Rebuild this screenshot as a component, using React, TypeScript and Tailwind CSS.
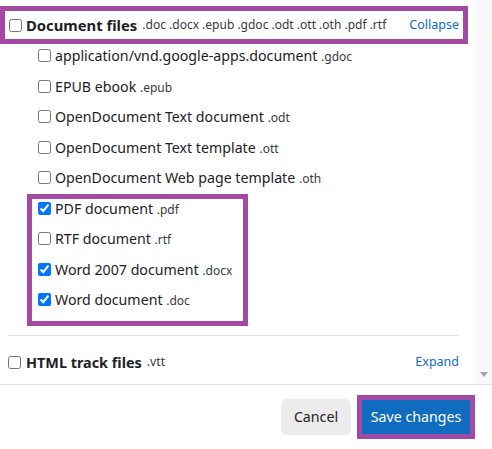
const font = { fontFamily: '"Noto Sans", "Open Sans", sans-serif' };

const subItems: { label: string; ext: string; checked: boolean }[] = [
  { label: 'application/vnd.google-apps.document', ext: '.gdoc', checked: false },
  { label: 'EPUB ebook', ext: '.epub', checked: false },
  { label: 'OpenDocument Text document', ext: '.odt', checked: false },
  { label: 'OpenDocument Text template', ext: '.ott', checked: false },
  { label: 'OpenDocument Web page template', ext: '.oth', checked: false },
];

const boxed: { label: string; ext: string; checked: boolean }[] = [
  { label: 'PDF document', ext: '.pdf', checked: true },
  { label: 'RTF document', ext: '.rtf', checked: false },
  { label: 'Word 2007 document', ext: '.docx', checked: true },
  { label: 'Word document', ext: '.doc', checked: true },
];

function Row({ label, ext, checked }: { label: string; ext: string; checked: boolean }) {
  return (
    <label className="flex items-start h-[30.5px]">
      <input type="checkbox" defaultChecked={checked} className="m-0 mt-[3px] w-[13px] h-[13px] shrink-0" />
      <span className="ml-[4px] text-[14.2px] leading-[20px] text-[#1d2125] whitespace-nowrap">
        {label} <span className="text-[12px] text-[#343a40]">{ext}</span>
      </span>
    </label>
  );
}

export default function App() {
  return (
    <div className="w-[492px] h-[449px] bg-white flex flex-col overflow-hidden" style={font}>
      <div className="h-[385px] flex border-b border-[#dee2e6]">
        <div className="flex-1 pt-[12px]">
          {/* Document files header */}
          <div className="ml-[5px] w-[458px] h-[28px] flex items-center pl-[4px] pr-[4px] -mt-[1px] outline-solid outline-[length:5px] outline-[#a34aa4]">
            <input type="checkbox" className="m-0 w-[13px] h-[13px] shrink-0" />
            <span className="ml-[4px] text-[14.8px] font-bold text-[#1d2125] whitespace-nowrap">Document files</span>
            <span className="ml-[5px] text-[12px] text-[#343a40] whitespace-nowrap">.doc .docx .epub .gdoc .odt .ott .oth .pdf .rtf</span>
            <a className="ml-auto text-[12.5px] text-[#0f6cbf]">Collapse</a>
          </div>

          <div className="mt-[7px]">
            {subItems.map(i => (
              <div key={i.label} className="pl-[38px]">
                <Row {...i} />
              </div>
            ))}
            <div className="ml-[32px] w-[211px] pl-[6px] outline-solid outline-[length:5px] outline-[#a34aa4]">
              {boxed.map(i => (
                <Row key={i.label} {...i} />
              ))}
            </div>
          </div>

          <div className="ml-[8px] w-[451px] mt-[14px] border-t border-[#dee2e6]" />

          {/* HTML track files */}
          <div className="mt-[16px] ml-[8px] w-[451px] flex items-center">
            <input type="checkbox" className="m-0 w-[13px] h-[13px] shrink-0" />
            <span className="ml-[5px] text-[14.4px] font-bold text-[#1d2125]">HTML track files</span>
            <span className="ml-[5px] text-[12.3px] text-[#343a40]">.vtt</span>
            <a className="ml-auto text-[12.5px] text-[#0f6cbf]">Expand</a>
          </div>
        </div>

        {/* scrollbar */}
        <div className="w-[16px] bg-[#f8f8f8] flex flex-col justify-end items-center pb-[7px]">
          <svg width="8" height="5" viewBox="0 0 8 5">
            <path d="M0 0 L8 0 L4 5 Z" fill="#a3a3a3" />
          </svg>
        </div>
      </div>

      {/* footer */}
      <div className="flex-1 flex items-center justify-end pr-[22px] gap-[11px]">
        <button className="h-[36px] w-[70px] rounded-[6px] bg-[#ececec] text-[14.2px] text-[#1d2125]">Cancel</button>
        <button className="h-[34px] w-[108px] bg-[#0f6cbf] text-[14.2px] text-white outline-solid outline-[length:5px] outline-[#a34aa4]">
          Save changes
        </button>
      </div>
    </div>
  );
}
